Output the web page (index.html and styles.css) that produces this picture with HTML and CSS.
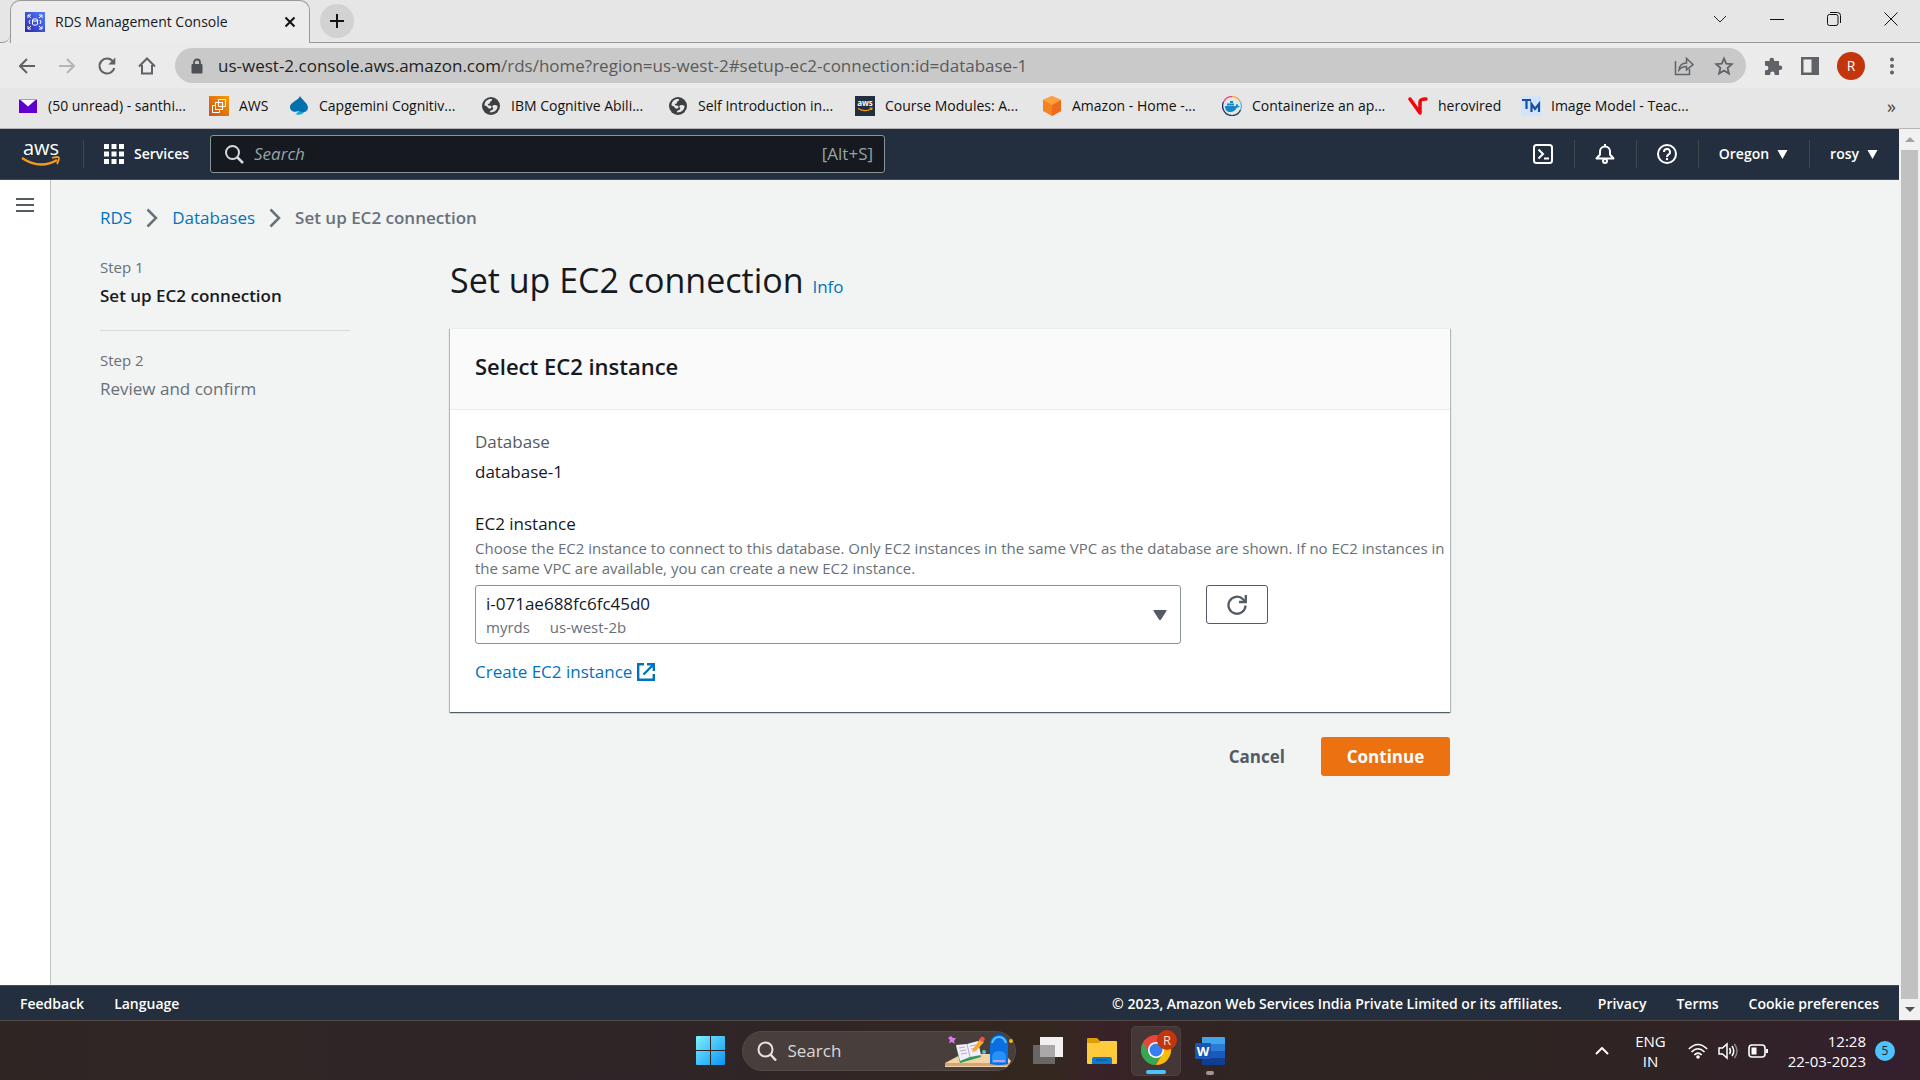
FILE: index.html
```html
<!DOCTYPE html>
<html lang="en">
<head>
<meta charset="utf-8">
<title>RDS Management Console</title>
<link rel="stylesheet" href="styles.css">
</head>
<body>
<div class="browser">
  <div class="tabstrip">
    <div class="tab-lead"></div>
    <div class="tab">
      <svg class="i20" viewBox="0 0 20 20"><defs><linearGradient id="rds" x1="0" y1="1" x2="1" y2="0"><stop offset="0" stop-color="#2e27ad"/><stop offset="1" stop-color="#527fff"/></linearGradient></defs><rect width="20" height="20" fill="url(#rds)"/><g fill="none" stroke="#fff" stroke-width="1"><path d="M3 6V3h3M3 3l3 3M17 6V3h-3M17 3l-3 3M3 14v3h3M3 17l3-3M17 14v3h-3M17 17l-3-3M5 8l-1 2 1 2M15 8l1 2-1 2"/><ellipse cx="10" cy="8" rx="2.500" ry="1.200"/><path d="M7.500 8v4c0 1.600 5 1.600 5 0V8"/></g></svg>
      <span class="tab-title">RDS Management Console</span>
      <button class="plain" aria-label="Close tab"><svg class="i12" viewBox="0 0 12 12"><path d="M1.500 1.500l9 9M10.500 1.500l-9 9" stroke="#111" stroke-width="2"/></svg></button>
    </div>
    <div class="strip-rest">
      <button class="newtab" aria-label="New tab"><svg class="i16" viewBox="0 0 16 16"><path d="M8 1v14M1 8h14" stroke="#111" stroke-width="2"/></svg></button>
      <div class="winctl">
        <button class="plain" aria-label="Search tabs"><svg class="i14" viewBox="0 0 14 14"><path d="M1 4l6 6 6-6" fill="none" stroke="#222"/></svg></button>
        <button class="plain" aria-label="Minimize"><svg class="i14" viewBox="0 0 14 14"><path d="M0 7.500h14" stroke="#111"/></svg></button>
        <button class="plain" aria-label="Restore"><svg class="i14" viewBox="0 0 14 14"><rect x=".5" y="2.500" width="10.500" height="11" rx="2" fill="none" stroke="#111"/><path d="M3 .5h7.500a3 3 0 0 1 3 3V11" fill="none" stroke="#111"/></svg></button>
        <button class="plain" aria-label="Close"><svg class="i14" viewBox="0 0 14 14"><path d="M.5.5l13 13M13.500.5l-13 13" stroke="#111"/></svg></button>
      </div>
    </div>
  </div>
  <div class="toolbar">
    <button class="plain" aria-label="Back"><svg class="i20" viewBox="0 0 20 20"><path d="M18 10H3M10 3l-7 7 7 7" fill="none" stroke="#5f6368" stroke-width="2"/></svg></button>
    <button class="plain" aria-label="Forward"><svg class="i20" viewBox="0 0 20 20"><path d="M2 10h15M10 3l7 7-7 7" fill="none" stroke="#b4b5b7" stroke-width="2"/></svg></button>
    <button class="plain" aria-label="Reload"><svg class="i20" viewBox="0 0 20 20"><path d="M16 5.500A7.500 7.500 0 1 0 17.300 12" fill="none" stroke="#5f6368" stroke-width="2"/><path d="M18.300 1.500v7h-7z" fill="#5f6368"/></svg></button>
    <button class="plain" aria-label="Home"><svg class="i20" viewBox="0 0 20 20"><path d="M5 9v8.500h10V9M2 10.500l8-8 8 8" fill="none" stroke="#5f6368" stroke-width="2"/></svg></button>
    <div class="omnibox">
      <svg class="i16" viewBox="0 0 16 16"><rect x="2.500" y="6" width="11" height="9.500" rx="1" fill="#4d5156"/><path d="M5 6V4.500a3 3 0 0 1 6 0V6" fill="none" stroke="#4d5156" stroke-width="1.800"/></svg>
      <span class="url"><span class="host">us-west-2.console.aws.amazon.com</span>/rds/home?region=us-west-2#setup-ec2-connection:id=database-1</span>
      <button class="plain" aria-label="Share"><svg class="i20" viewBox="0 0 20 20"><path d="M1.500 5v13.500h14V13" fill="none" stroke="#5f6368" stroke-width="1.500"/><path d="M5 14c.5-4.500 3-7 7.500-7V2.500L19 8.500l-6.500 5.500v-3.500C9 10.500 7 11.500 5 14z" fill="none" stroke="#5f6368" stroke-width="1.500"/></svg></button>
      <button class="plain" aria-label="Bookmark"><svg class="i20" viewBox="0 0 20 20"><path d="M10 2.500l2.200 5.200 5.700.5-4.300 3.700 1.300 5.600-4.900-3-4.900 3 1.300-5.600-4.300-3.700 5.700-.5z" fill="none" stroke="#5f6368" stroke-width="1.800"/></svg></button>
    </div>
    <div class="tools">
      <button class="plain" aria-label="Extensions"><svg class="i20" viewBox="0 0 20 20"><path d="M2 5h4.500V4a2.300 2.300 0 0 1 4.600 0v1H16v4.500h1a2.300 2.300 0 0 1 0 4.600h-1V19h-4.400v-1.200a2.200 2.200 0 0 0-4.400 0V19H2v-4.800h1.200a2.200 2.200 0 0 0 0-4.400H2z" fill="#5f6368"/></svg></button>
      <button class="plain" aria-label="Side panel"><svg class="i20" viewBox="0 0 20 20"><path d="M1 1h18v18H1z" fill="#5f6368"/><path d="M3.500 3.500h8v13h-8z" fill="#ececec"/></svg></button>
      <button class="avatar" aria-label="Profile">R</button>
      <button class="plain" aria-label="Menu"><svg class="i20" viewBox="0 0 20 20"><g fill="#5f6368"><circle cx="10" cy="3.500" r="2"/><circle cx="10" cy="10" r="2"/><circle cx="10" cy="16.500" r="2"/></g></svg></button>
    </div>
  </div>
  <nav class="bookmarks">
    <a href="#"><svg class="i20" viewBox="0 0 20 20"><path d="M1 3.500h18v13.500H1z" fill="#6001d2"/><path d="M2 3.500h16l-8 7z" fill="#fff"/><path d="M1 3.500h18" stroke="#b58aea"/></svg>(50 unread) - santhi...</a>
    <a href="#"><svg class="i20" viewBox="0 0 20 20"><defs><linearGradient id="ec" x1="0" y1="1" x2="1" y2="0"><stop offset="0" stop-color="#c8511b"/><stop offset="1" stop-color="#f90"/></linearGradient></defs><path d="M0 0h20v20H0z" fill="url(#ec)"/><g fill="none" stroke="#fff"><path d="M9.500 3.500h7v7h-7z"/><rect x="6.500" y="6.500" width="7" height="7"/><path d="M6.500 9.500h-3v7h7v-3"/></g></svg>AWS</a>
    <a href="#"><svg class="i20" viewBox="0 0 20 20"><path d="M11 0c2 4 8 7 8 12a5 5 0 0 1-6 4c-1 2-4 2-6 1 2 0 3-1 3-2-5 2-9 0-9-4C1 6 9 5 11 0z" fill="#0070ad"/><path d="M19 12a5 5 0 0 1-8 3c-1 2-3 3-5 3 5 2 8 0 9-2 3 0 4-2 4-4z" fill="#12abdb"/></svg>Capgemini Cognitiv...</a>
    <a href="#"><svg class="i20" viewBox="0 0 20 20"><circle cx="10" cy="10" r="9" fill="#3c4043"/><path d="M3.500 8.500C4 5 7 2.500 10.500 3c1.500.8 0 2-1 2.500s0 1.500-1 2-2 .5-1.500 1.500 3 0 3.500 1.500-1 2.500-2.500 2-1.500-2-3-2.500-1.500-.5-1.500-1.500zM9 16.500c-.5-1.500.5-2 2-2.500s1.500-2 .5-3 1-2.500 2.500-2 2.500 0 2.500 1.500c0 3-3 6-7.500 6z" fill="#e6e6e6"/></svg>IBM Cognitive Abili...</a>
    <a href="#"><svg class="i20" viewBox="0 0 20 20"><circle cx="10" cy="10" r="9" fill="#3c4043"/><path d="M3.500 8.500C4 5 7 2.500 10.500 3c1.500.8 0 2-1 2.500s0 1.500-1 2-2 .5-1.500 1.500 3 0 3.500 1.500-1 2.500-2.500 2-1.500-2-3-2.500-1.500-.5-1.500-1.500zM9 16.500c-.5-1.500.5-2 2-2.500s1.500-2 .5-3 1-2.500 2.500-2 2.500 0 2.500 1.500c0 3-3 6-7.500 6z" fill="#e6e6e6"/></svg>Self Introduction in...</a>
    <a href="#"><svg class="i20" viewBox="0 0 20 20"><path d="M0 0h20v20H0z" fill="#232f3e"/><text x="10" y="10" font-size="8" font-weight="700" fill="#fff" text-anchor="middle">aws</text><path d="M3 12.500q7 4 13 .5M14.500 12h2.500l-.5 2" fill="none" stroke="#f90" stroke-width="1.200"/></svg>Course Modules: A...</a>
    <a href="#"><svg class="i20" viewBox="0 0 20 20"><path d="M10 0l9 4v11l-9 5-9-5V4z" fill="#f58220"/><path d="M10 9l9-5v11l-9 5z" fill="#ee6a1d"/><path d="M10 0l9 4-9 5-9-5z" fill="#ffa03a"/></svg>Amazon - Home -...</a>
    <a href="#"><svg class="i20" viewBox="0 0 20 20"><g fill="none" stroke-width="1.300"><path d="M1.500 14A9.300 9.300 0 0 1 1.500 6" stroke="#27246b"/><path d="M1.500 6A9.300 9.300 0 0 1 10 .7" stroke="#e0408a"/><path d="M10 .7a9.300 9.300 0 0 1 8.500 5.500" stroke="#f6a23b"/><path d="M18.500 6.200a9.300 9.300 0 0 1 0 7.800" stroke="#35c6dc"/><path d="M18.500 14a9.300 9.300 0 0 1-17 0" stroke="#1d3c5a"/></g><path d="M3 10h11c0-1 0-2 1-2s1 1 1 2l2 .3c-1 1-2 1.200-3 1.200C13 15 11 16 8.500 16 5 16 3 14 3 10zM5 7.500h7v2H5zM8 5h3v2H8z" fill="#1488c6"/></svg>Containerize an ap...</a>
    <a href="#"><svg class="i20" viewBox="0 0 20 20"><path d="M2 3l10 14V6q0-3 6-3" fill="none" stroke="#f0060b" stroke-width="3.500" stroke-linecap="round" stroke-linejoin="round"/></svg>herovired</a>
    <a href="#"><svg class="i20" viewBox="0 0 20 20"><rect width="20" height="20" rx="2" fill="#d2e3fc"/><path d="M1 4h9M5.500 4v9M10.500 16V8l3.500 5 4-5v8" fill="none" stroke="#174ea6" stroke-width="2.200"/></svg>Image Model - Teac...</a>
    <button class="plain more" aria-label="More bookmarks">»</button>
  </nav>
</div>

<div class="viewport">
  <div class="page">
    <header class="nav">
      <a class="aws" href="#" aria-label="AWS"><svg width="40" height="42" viewBox="0 -7 40 42"><text x="20" y="15" font-size="20" fill="#fff" text-anchor="middle">aws</text><path d="M1 18q18 12 35 2" fill="none" stroke="#f7981f" stroke-width="2.400"/><path d="M31 18q7-2 7 0t-2 6" fill="none" stroke="#f7981f" stroke-width="1.800"/></svg></a>
      <button class="services"><svg class="i20" viewBox="0 0 20 20"><g fill="#fff"><path d="M0 0h5v5H0zM7.500 0h5v5h-5zM15 0h5v5h-5zM0 7.500h5v5H0zM7.500 7.500h5v5h-5zM15 7.500h5v5h-5zM0 15h5v5H0zM7.500 15h5v5h-5zM15 15h5v5h-5z"/></g></svg>Services</button>
      <label class="search"><svg class="i20" viewBox="0 0 20 20"><circle cx="8.500" cy="8.500" r="6.500" fill="none" stroke="#d5dbdb" stroke-width="2"/><path d="M13 13l6 6" stroke="#d5dbdb" stroke-width="2.500"/></svg><input type="search" placeholder="Search" aria-label="Search"><span>[Alt+S]</span></label>
      <div class="nav-right">
        <button class="cell" aria-label="CloudShell"><svg class="i20" viewBox="0 0 20 20"><rect x="1" y="1" width="18" height="18" rx="2.500" fill="none" stroke="#fff" stroke-width="2"/><path d="M5.500 5.500L10 10l-4.500 4.500M11 14.500h5" fill="none" stroke="#fff" stroke-width="2"/></svg></button>
        <button class="cell" aria-label="Notifications"><svg class="i20" viewBox="0 0 20 20"><path d="M1.500 14.500L5 10.500V7.500a5 5 0 0 1 10 0v3l3.500 4z" fill="none" stroke="#fff" stroke-width="2" stroke-linejoin="round"/><path d="M10 0v3" stroke="#fff" stroke-width="2"/><circle cx="10" cy="17" r="2" fill="#232f3e" stroke="#fff" stroke-width="2"/></svg></button>
        <button class="cell" aria-label="Help"><svg class="i20" viewBox="0 0 20 20"><circle cx="10" cy="10" r="9" fill="none" stroke="#fff" stroke-width="2"/><path d="M7 8a3 3 0 1 1 4.500 2.500Q10 11.300 10 13" fill="none" stroke="#fff" stroke-width="2"/><circle cx="10" cy="15" r="1.200" fill="#fff"/></svg></button>
        <button class="cell">Oregon<svg class="tri" viewBox="0 0 10 9"><path d="M0 0h10L5 9z" fill="#fff"/></svg></button>
        <button class="cell">rosy<svg class="tri" viewBox="0 0 10 9"><path d="M0 0h10L5 9z" fill="#fff"/></svg></button>
      </div>
    </header>
    <div class="body">
      <aside class="rail"><button class="plain" aria-label="Open navigation"><svg width="18" height="16" viewBox="0 0 18 16"><path d="M0 2h18M0 8h18M0 14h18" stroke="#545b64" stroke-width="2"/></svg></button></aside>
      <main class="content">
        <nav class="crumbs"><a href="#">RDS</a><svg class="chev" viewBox="0 0 12 20"><path d="M1.500 1.500L10 10l-8.500 8.500" fill="none" stroke="#687078" stroke-width="2.500"/></svg><a href="#">Databases</a><svg class="chev" viewBox="0 0 12 20"><path d="M1.500 1.500L10 10l-8.500 8.500" fill="none" stroke="#687078" stroke-width="2.500"/></svg><span>Set up EC2 connection</span></nav>
        <div class="wizard">
          <ol class="steps">
            <li><small>Step 1</small><strong>Set up EC2 connection</strong></li>
            <li><small>Step 2</small><span>Review and confirm</span></li>
          </ol>
          <section class="form">
            <h1>Set up EC2 connection <a href="#">Info</a></h1>
            <div class="card">
              <h2>Select EC2 instance</h2>
              <div class="card-body">
                <div class="kv"><div class="key">Database</div><div>database-1</div></div>
                <label for="inst">EC2 instance</label>
                <p>Choose the EC2 instance to connect to this database. Only EC2 instances in the same VPC as the database are shown. If no EC2 instances in the same VPC are available, you can create a new EC2 instance.</p>
                <div class="pick">
                  <div class="select">
                    <select id="inst"><option>i-071ae688fc6fc45d0</option></select>
                    <div class="meta"><span>myrds</span><span>us-west-2b</span></div>
                    <svg class="caret" viewBox="0 0 14 10"><path d="M1 0h12q1 0 .5 1L8 9.500q-1 1-2 0L.5 1Q0 0 1 0z" fill="#545b64"/></svg>
                  </div>
                  <button class="refresh" aria-label="Refresh"><svg class="i20" viewBox="0 0 20 20"><path d="M18.500 10.500A8.500 8.500 0 1 1 16 4.200l2 2" fill="none" stroke="#545b64" stroke-width="2.300"/><path d="M18.800 0v7H12" fill="none" stroke="#545b64" stroke-width="2.300"/></svg></button>
                </div>
                <a class="create" href="#">Create EC2 instance<svg width="18" height="18" viewBox="0 0 18 18"><path d="M7 1.200H1.200v15.600h15.600V11M10 1.200h6.800V8M16.500 1.500L6.500 11.500" fill="none" stroke="#0073bb" stroke-width="2.400"/></svg></a>
              </div>
            </div>
            <div class="actions"><button class="cancel">Cancel</button><button class="continue">Continue</button></div>
          </section>
        </div>
      </main>
    </div>
    <footer class="foot"><a href="#">Feedback</a><a href="#">Language</a><span>© 2023, Amazon Web Services India Private Limited or its affiliates.</span><a href="#">Privacy</a><a href="#">Terms</a><a href="#">Cookie preferences</a></footer>
  </div>
  <div class="scroll"><svg class="arrow" viewBox="0 0 21 21"><path d="M6 13h10l-5-5z" fill="#a3a3a3"/></svg><div class="thumb"></div><svg class="arrow" viewBox="0 0 21 21"><path d="M6 8h10l-5 5z" fill="#505050"/></svg></div>
</div>

<div class="taskbar">
  <div class="apps">
    <button class="plain" aria-label="Start"><svg width="30" height="30" viewBox="0 0 30 30"><defs><linearGradient id="win" x1="0" y1="0" x2="1" y2="1"><stop offset="0" stop-color="#7df0ff"/><stop offset="1" stop-color="#0a94f5"/></linearGradient></defs><path d="M1 0h13v14H0V1q0-1 1-1zM15 0h13q1 0 1 1v13H15zM0 15h14v14H1q-1 0-1-1zM15 15h14v13q0 1-1 1H15z" fill="url(#win)"/></svg></button>
    <label class="tb-search"><svg class="i20" viewBox="0 0 20 20"><circle cx="8.500" cy="8.500" r="7" fill="none" stroke="#e6e2e1" stroke-width="2"/><path d="M13.500 13.500l5.500 6" stroke="#e6e2e1" stroke-width="2.500"/></svg><input type="text" placeholder="Search" aria-label="Search Windows">
      <svg width="68" height="34" viewBox="0 0 68 34"><path d="M0 29L17 20h42l7 7-4 6H0z" fill="#f3d3a6"/><path d="M0 29h65l-3 3H0z" fill="#d3a678"/><path d="M6 2l2 2 3 0-2 3 1 3-3-2-3 1 1-3-2-2z" fill="#dc7af5"/><path d="M11 13l22-5 3 15-21 6z" fill="#2e9a53"/><path d="M11 11l11-1 11-3 3 14-11 2-10 4z" fill="#f2effa"/><path d="M22 10l3 13M14 14l6-1M15 17l6-1M16 20l6-1M25 12l6-1M26 15l6-1" stroke="#b4a9cc"/><path d="M28 15L35 5l4 3-8 9-4 1z" fill="#f7a928"/><path d="M34 6l2-3q3-1 4 2l-2 3z" fill="#ea5342"/><circle cx="39" cy="18" r="2" fill="#53c4cf"/><circle cx="66" cy="7" r="2" fill="#f5b21b"/><path d="M50 4q0-4 4-4t4 4" fill="none" stroke="#0b4fb2" stroke-width="2"/><path d="M45 12q0-11 9-11t9 11v18q-9 2-18 0z" fill="#0c6fe0"/><path d="M47 9q2-6 7-6t7 6" fill="none" stroke="#5ac1ff" stroke-width="2"/><path d="M47 23q0-6 7-6t7 6v6H47z" fill="#2493f5"/><path d="M48 27h12" stroke="#c09bff" stroke-width="2"/></svg></label>
    <button class="app" aria-label="Task View"><svg width="30" height="30" viewBox="0 0 30 30"><path d="M0 9h22v19H0z" fill="#6a6666"/><path d="M7 1h23v20H7z" fill="#f1f1f1"/><path d="M7 9h15v12H7z" fill="#aaa8a8"/></svg></button>
    <button class="app" aria-label="File Explorer"><svg width="30" height="30" viewBox="0 0 30 30"><path d="M0 3q0-1 1-1h9l3 3h1v6H0z" fill="#dd9d06"/><path d="M0 7h12l2-2h15q1 0 1 1v21q0 1-1 1H1q-1 0-1-1z" fill="#ffcb3d"/><path d="M5 28v-5q0-2 2-2h16q2 0 2 2v5z" fill="#1078cf"/><path d="M9 24h12" stroke="#0a4a94"/></svg></button>
    <button class="app active" aria-label="Google Chrome"><svg width="36" height="42" viewBox="0 0 36 42"><circle cx="15" cy="20" r="15" fill="#e8453c"/><path d="M15 20L2 12.500A15 15 0 0 0 14 35l7.500-11z" fill="#34a853"/><path d="M15 12h12.700A15 15 0 0 1 15 35l6.500-11.300z" fill="#fbbc05"/><path d="M2 12.500a15 15 0 0 1 25.700 0H15L8.500 24z" fill="#e8453c"/><circle cx="15" cy="20" r="8" fill="#fff"/><circle cx="15" cy="20" r="6.500" fill="#377ef0"/><circle cx="26" cy="10" r="10" fill="#c2350d"/><text x="26" y="15" font-size="13" fill="#f5dcd4" text-anchor="middle">R</text></svg></button>
    <button class="app word" aria-label="Word"><svg width="30" height="30" viewBox="0 0 30 30"><path d="M7 1h22q1 0 1 1v6H7z" fill="#41a5ee"/><path d="M7 8h23v7H7z" fill="#2b7cd3"/><path d="M7 15h23v7H7z" fill="#185abd"/><path d="M7 22h23v6q0 1-1 1H7z" fill="#103f91"/><rect y="7" width="16" height="16" rx="1" fill="#1a55b5"/><text x="8" y="20" font-size="13" font-weight="700" fill="#fff" text-anchor="middle">W</text></svg></button>
  </div>
  <div class="tray">
    <svg width="14" height="8" viewBox="0 0 14 8"><path d="M1 7l6-6 6 6" fill="none" stroke="#fff" stroke-width="2"/></svg>
    <div class="lang">ENG<br>IN</div>
    <div class="sys">
      <svg class="i20" viewBox="0 0 20 20"><g fill="none" stroke="#fff" stroke-width="1.600"><path d="M.8 8q9.200-9 18.400 0M3.500 11q6.500-6.500 13 0M6.300 14q3.700-3.700 7.400 0"/></g><circle cx="10" cy="16" r="1.800" fill="#fff"/></svg>
      <svg class="i20" viewBox="0 0 20 20"><g fill="none" stroke="#fff" stroke-width="1.500"><path d="M1 7h3.500L9 3v14l-4.500-4H1zM11.500 7q2 3 0 6M14 5q3.500 5 0 10"/><path d="M16.500 3q5 7 0 14" stroke="#8d8584"/></g></svg>
      <svg class="i20" viewBox="0 0 20 20"><rect x="1" y="4" width="16" height="12" rx="3" fill="none" stroke="#fff" stroke-width="1.600"/><path d="M3.500 6.500h5v7h-5zM18 8h2v4h-2z" fill="#fff"/></svg>
    </div>
    <div class="clock">12:28<br>22-03-2023</div>
    <span class="count">5</span>
  </div>
</div>
</body>
</html>
```
FILE: styles.css
```css
* { box-sizing: border-box; }
body {
  margin: 0;
  height: 100vh;
  display: flex;
  flex-direction: column;
  font-family: "Open Sans", "Noto Sans", sans-serif;
  font-size: 17px;
  line-height: 24px;
  color: #16191f;
  overflow: hidden;
}
a { color: #0073bb; text-decoration: none; }
button, input, select { font: inherit; color: inherit; }
button { cursor: pointer; border: 0; background: none; padding: 0; }
svg { display: block; flex: none; }
.i12 { width: 12px; height: 12px; }
.i14 { width: 14px; height: 14px; }
.i16 { width: 16px; height: 16px; }
.i20 { width: 20px; height: 20px; }
.plain { display: flex; align-items: center; justify-content: center; }

/* Browser window */
.browser { background: #e6e6e6; font-size: 14px; line-height: 20px; border-bottom: 1px solid #b5b5b5; }
.tabstrip { display: flex; height: 43px; }
.tab-lead { width: 10px; border-bottom: 1px solid #999; border-radius: 0 0 8px 0; }
.tab {
  width: 300px;
  display: flex;
  align-items: center;
  gap: 10px;
  padding: 0 13px 0 14px;
  background: #ececec;
  border: 1px solid #999;
  border-bottom: 0;
  border-radius: 10px 10px 0 0;
}
.tab-title { flex: 1; white-space: nowrap; }
.strip-rest { flex: 1; display: flex; justify-content: space-between; align-items: center; border-bottom: 1px solid #999; padding: 0 22px 0 10px; }
.newtab { width: 34px; height: 34px; border-radius: 50%; background: #d2d2d2; display: flex; align-items: center; justify-content: center; }
.winctl { display: flex; gap: 43px; margin-top: -5px; }
.toolbar { display: flex; align-items: center; gap: 20px; height: 45px; padding: 0 18px 0 17px; background: #ebebeb; }
.omnibox {
  flex: 1;
  display: flex;
  align-items: center;
  gap: 20px;
  height: 35px;
  margin-left: -2px;
  padding: 0 12px 0 14px;
  border-radius: 18px;
  background: #c9c9c9;
}
.url { flex: 1; font-size: 17px; color: #5a5a5a; margin-left: -7px; white-space: nowrap; }
.host { color: #1f1f1f; }
.tools { display: flex; align-items: center; gap: 17px; margin-left: -3px; }
.avatar { width: 28px; height: 28px; border-radius: 50%; background: #c2350d; color: #fff; font-size: 14px; line-height: 28px; }
.bookmarks {
  display: grid;
  grid-template-columns: 191px 80px 192px 187px 187px 187px 180px 186px 113px 1fr auto;
  align-items: center;
  height: 40px;
  padding: 0 24px 4px 18px;
}
.bookmarks a { display: flex; gap: 10px; align-items: center; color: #111; white-space: nowrap; }
.more { font-size: 18px; color: #444; }

/* Console */
.viewport { flex: 1; display: flex; min-height: 0; }
.page { flex: 1; display: flex; flex-direction: column; background: #f2f3f3; min-width: 0; }
.nav { display: flex; align-items: center; height: 51px; background: #232f3e; border-bottom: 1px solid #414d5c; color: #fff; font-size: 14px; }
.aws { display: flex; align-items: center; width: 84px; padding-left: 21px; height: 28px; border-right: 1px solid #414750; }
.services { display: flex; align-items: center; gap: 10px; padding: 0 21px 0 20px; font-weight: 600; }
.search { width: 675px; height: 38px; display: flex; align-items: center; gap: 10px; padding: 0 11px 0 13px; background: #16191f; border: 1px solid #879596; border-radius: 3px; color: #95a5a6; font-size: 17px; }
.search input { flex: 1; min-width: 0; border: 0; padding: 0; background: none; outline: 0; }
.search input::placeholder { color: #95a5a6; font-style: italic; opacity: 1; }
.nav-right { margin-left: auto; display: flex; }
.cell { display: flex; align-items: center; gap: 8px; height: 28px; padding: 0 21px 0 20px; border-right: 1px solid #414750; font-weight: 600; }
.cell:last-child { border: 0; }
.tri { width: 11px; height: 9px; }
.body { flex: 1; display: flex; min-height: 0; }
.rail { width: 51px; background: #fff; border-right: 1px solid #bcc4c4; padding: 17px 16px; }
.content { flex: 1; padding: 26px 50px 0 49px; }
.crumbs { display: flex; align-items: center; gap: 14px; color: #687078; font-weight: 600; }
.crumbs a { font-weight: 400; }
.chev { width: 12px; height: 20px; }
.wizard { display: grid; grid-template-columns: 250px minmax(0, 1000px); gap: 100px; margin-top: 27px; }
.steps { list-style: none; margin: 0; padding: 0; color: #687078; }
.steps li { padding-bottom: 22px; margin-bottom: 19px; border-bottom: 1px solid #d5dbdb; }
.steps li:last-child { border: 0; }
.steps small { display: block; font-size: 15px; line-height: 20px; margin-bottom: 7px; }
.steps strong { color: #16191f; font-weight: 600; }
.steps strong, .steps span { display: block; }
h1 { margin: 0; font-size: 34px; line-height: 46px; font-weight: 400; }
h1 a { font-size: 17px; }
.card { margin-top: 18px; background: #fff; border-top: 1px solid #eaeded; box-shadow: 0 1px 1px 0 rgba(0,28,36,.5), 1px 1px 1px 0 rgba(0,28,36,.2), -1px 1px 1px 0 rgba(0,28,36,.2); }
h2 { margin: 0; padding: 22px 25px 28px; font-size: 22px; line-height: 30px; font-weight: 600; background: #fafafa; border-bottom: 1px solid #eaeded; }
.card-body { padding: 20px 25px 28px; }
.kv { display: flex; flex-direction: column; gap: 6px; margin-bottom: 28px; }
.key { color: #545b64; }
.card label { display: block; }
.card p { margin: 2px -22px 7px 0; font-size: 15px; line-height: 20px; color: #687078; }
.pick { display: flex; gap: 25px; align-items: flex-start; }
.select { position: relative; width: 706px; }
select { display: block; width: 100%; height: 59px; appearance: none; padding: 0 40px 22px 10px; border: 1px solid #879596; border-radius: 3px; background: #fff; }
.meta { position: absolute; left: 11px; bottom: 7px; display: flex; gap: 20px; font-size: 15px; line-height: 20px; color: #687078; pointer-events: none; }
.caret { position: absolute; right: 14px; top: 25px; width: 14px; height: 10px; pointer-events: none; }
.refresh { width: 62px; height: 39px; display: flex; align-items: center; justify-content: center; border: 1px solid #545b64; border-radius: 3px; background: #fff; }
.create { display: inline-flex; align-items: center; gap: 5px; margin-top: 16px; }
.actions { display: flex; justify-content: flex-end; gap: 36px; margin-top: 25px; }
.actions button { height: 39px; font-weight: 700; }
.cancel { color: #545b64; }
.continue { min-width: 129px; background: #ec7211; color: #fff; border-radius: 3px; }
.foot { display: flex; align-items: center; gap: 30px; height: 35px; padding: 1px 20px 0; background: #232f3e; border-top: 1px solid #414d5c; font-size: 14px; font-weight: 600; color: #fff; }
.foot a { color: #fff; }
.foot span { margin-left: auto; margin-right: 6px; }
.scroll { width: 21px; display: flex; flex-direction: column; background: #f1f1f1; }
.arrow { width: 21px; height: 21px; }
.thumb { flex: 1; margin: 0 2px; background: #c1c1c1; }

/* Windows taskbar */
.taskbar {
  display: grid;
  grid-template-columns: 1fr auto 1fr;
  align-items: center;
  height: 60px;
  border-top: 1px solid #544b49;
  background: linear-gradient(90deg, #2f2624, #2f2528 35%, #33271f 55%, #3a2228 57%, #2e2522 65%, #2f2423 85%, #341f2e);
  color: #fff;
  font-size: 15px;
  line-height: 20px;
}
.apps { grid-column: 2; display: flex; align-items: center; padding-left: 12px; }
.tb-search { display: flex; align-items: center; gap: 11px; width: 274px; height: 40px; margin: 0 5px 0 16px; padding: 0 2px 0 14px; border: 1px solid #544b49; border-radius: 20px; background: #483f3d; font-size: 17px; }
.tb-search input { flex: 1; min-width: 0; border: 0; padding: 0; background: none; outline: 0; }
.tb-search input::placeholder { color: #dcd8d7; opacity: 1; }
.app { position: relative; width: 50px; height: 50px; margin: 0 2px; display: flex; align-items: center; justify-content: center; border-radius: 5px; }
.active { background: #443735; border: 1px solid #4d403e; }
.active svg { margin-left: 6px; }
.active::after, .word::after { content: ""; position: absolute; bottom: 1px; width: 20px; height: 4px; border-radius: 2px; background: #4cc2ff; }
.word::after { width: 8px; background: #9c9695; }
.tray { display: flex; align-items: center; justify-content: flex-end; padding-right: 25px; }
.lang { margin: 0 22px 0 26px; text-align: center; }
.sys { display: flex; gap: 10px; }
.clock { margin: 0 9px 0 20px; text-align: right; }
.count { width: 20px; height: 20px; border-radius: 50%; background: #4cc2ff; color: #222; font-size: 12px; text-align: center; }
```
